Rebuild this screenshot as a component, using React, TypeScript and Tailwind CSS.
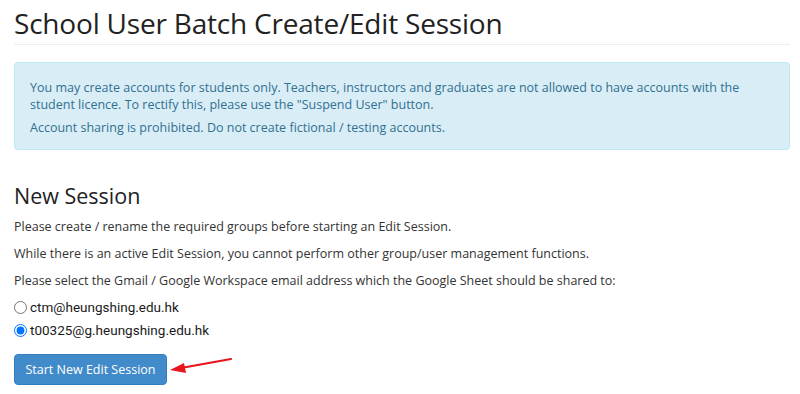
import React from "react";

export default function App() {
  return (
    <div className="w-[800px] h-[394px] overflow-hidden bg-white px-[14px] text-[#333] font-['Open_Sans',sans-serif] text-[12.5px] leading-[17px]">
      <h1 className="pt-[8px] pb-[6px] text-[28px] leading-[30px] font-medium tracking-[-0.2px] text-[#222] border-b border-[#eee] w-[776px]">
        School User Batch Create/Edit Session
      </h1>
      <div className="mt-[17px] w-[776px] rounded-[4px] border border-[#bce8f1] bg-[#d9edf7] text-[#31708f] px-[15px] pt-[16px] pb-[13px]">
        <p className="mb-[6px]">
          You may create accounts for students only. Teachers, instructors and graduates are not allowed to have accounts with the student licence. To rectify this, please use the "Suspend User" button.
        </p>
        <p>Account sharing is prohibited. Do not create fictional / testing accounts.</p>
      </div>
      <h2 className="mt-[33px] text-[21.5px] leading-[26px] text-[#222]">New Session</h2>
      <p className="mt-[9px]">Please create / rename the required groups before starting an Edit Session.</p>
      <p className="mt-[10px]">While there is an active Edit Session, you cannot perform other group/user management functions.</p>
      <p className="mt-[10px]">Please select the Gmail / Google Workspace email address which the Google Sheet should be shared to:</p>
      <div className="mt-[9px] flex flex-col gap-[5px] font-['Roboto',sans-serif] text-[13.5px] leading-[18px] text-[#1a1a1a]">
        <label className="flex items-center gap-[3px]">
          <input type="radio" name="email" className="m-0 w-[13px] h-[13px]" />
          <span>ctm@heungshing.edu.hk</span>
        </label>
        <label className="flex items-center gap-[3px]">
          <input type="radio" name="email" defaultChecked className="m-0 w-[13px] h-[13px]" />
          <span>t00325@g.heungshing.edu.hk</span>
        </label>
      </div>
      <div className="mt-[15px] flex items-center">
        <button className="h-[31px] w-[153px] rounded-[4px] border border-[#357ebd] bg-[#428bca] text-white text-[12.5px] font-['Open_Sans',sans-serif]">
          Start New Edit Session
        </button>
        <svg width="70" height="30" viewBox="0 0 70 30" className="ml-[0px] mt-[0px]">
          <line x1="64" y1="4" x2="14" y2="13" stroke="#e8151b" strokeWidth="2.2" strokeLinecap="round" />
          <polygon points="3,15 17,8 19,18" fill="#e8151b" />
        </svg>
      </div>
    </div>
  );
}
